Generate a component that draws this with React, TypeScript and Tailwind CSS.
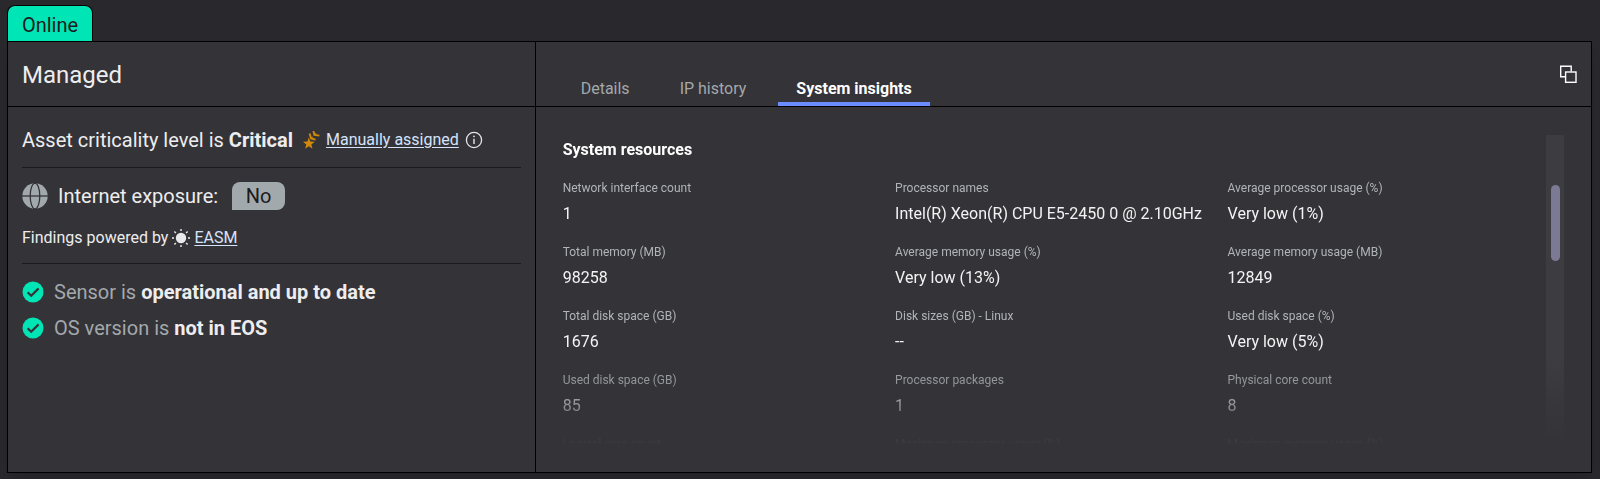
import { useState } from "react";
import type { ReactNode } from "react";

const TABS = ["Details", "IP history", "System insights"];

const RESOURCES = [
  { label: "Network interface count", value: "1" },
  { label: "Processor names", value: "Intel(R) Xeon(R) CPU E5-2450 0 @ 2.10GHz" },
  { label: "Average processor usage (%)", value: "Very low (1%)" },
  { label: "Total memory (MB)", value: "98258" },
  { label: "Average memory usage (%)", value: "Very low (13%)" },
  { label: "Average memory usage (MB)", value: "12849" },
  { label: "Total disk space (GB)", value: "1676" },
  { label: "Disk sizes (GB) - Linux", value: "--" },
  { label: "Used disk space (%)", value: "Very low (5%)" },
  { label: "Used disk space (GB)", value: "85" },
  { label: "Processor packages", value: "1" },
  { label: "Physical core count", value: "8" },
  { label: "Logical core count", value: "" },
  { label: "Maximum processor usage (%)", value: "" },
  { label: "Maximum memory usage (%)", value: "" },
];

function StarIcon() {
  return (
    <svg width="17" height="19" viewBox="0 0 17 19" fill="none" className="shrink-0">
      <path
        d="M5.8 6.4 L7.3 10.6 L11.8 10.8 L8.3 13.5 L9.5 17.8 L5.8 15.3 L2.1 17.8 L3.3 13.5 L0 10.8 L4.4 10.6 Z"
        fill="#cf8a09"
      />
      <path d="M6.6 2.6 L8 7.4 L12.6 8.6" stroke="#cf8a09" strokeWidth="1.9" />
      <path d="M10.4 0 L11.4 4 L16.4 4.6" stroke="#cf8a09" strokeWidth="1.9" />
      <path d="M8 7.4 L9.6 5.8 M11.4 4 L13 2.4" stroke="#cf8a09" strokeWidth="1.2" />
    </svg>
  );
}

function InfoIcon() {
  return (
    <svg width="18" height="18" viewBox="0 0 18 18" fill="none" stroke="#e6e6e8">
      <circle cx="9" cy="9" r="7.6" strokeWidth="1.3" />
      <line x1="9" y1="7.8" x2="9" y2="13" strokeWidth="1.4" />
      <circle cx="9" cy="5.3" r="0.9" fill="#e6e6e8" stroke="none" />
    </svg>
  );
}

function GlobeIcon() {
  return (
    <svg width="26" height="26" viewBox="0 0 26 26" fill="none" className="shrink-0">
      <circle cx="13" cy="13" r="12.7" fill="#a2a9ac" />
      <g stroke="#343337" strokeWidth="1.3">
        <ellipse cx="13" cy="13" rx="4.8" ry="12.9" />
        <line x1="0" y1="13" x2="26" y2="13" />
      </g>
    </svg>
  );
}

function SunIcon() {
  return (
    <svg width="18" height="18" viewBox="0 0 18 18" className="shrink-0">
      <circle cx="9" cy="9" r="5.2" fill="#e9e9eb" />
      <g stroke="#e9e9eb" strokeWidth="1.4">
        <path d="M9 0v2M9 16v2M0 9h2M16 9h2M2.4 2.4l1.5 1.5M14.1 14.1l1.5 1.5M2.4 15.6l1.5-1.5M14.1 3.9l1.5-1.5" />
      </g>
    </svg>
  );
}

function CheckIcon() {
  return (
    <svg width="22" height="22" viewBox="0 0 22 22" fill="none" className="shrink-0">
      <circle cx="11" cy="11" r="10.5" fill="#00e5b5" />
      <path d="M5.6 11.2 L9.2 14.8 L16.6 7.4" stroke="#343337" strokeWidth="2.2" />
    </svg>
  );
}

function CopyIcon() {
  return (
    <svg width="18" height="18" viewBox="0 0 18 18" fill="none" stroke="#ffffff" strokeWidth="1.4">
      <path d="M6 11.7H1.7V1.3H12.2V6.5" />
      <rect x="6.6" y="7" width="10.4" height="10.3" />
    </svg>
  );
}

function StatusRow({ children }: { children: ReactNode }) {
  return (
    <li className="flex h-9 items-center gap-2.5 text-xl text-[#a3a8ac]">
      <CheckIcon />
      <span>{children}</span>
    </li>
  );
}

export default function App() {
  const [active, setActive] = useState("System insights");

  return (
    <div className="min-h-screen bg-[#29282d] pt-[5px] pr-2 pl-[7px] font-[Roboto,sans-serif] text-[#ededef]">
      <div className="flex h-9 w-[86px] items-center justify-center rounded-t-lg border border-b-0 border-black bg-[#00e5b5] pt-0.5 text-xl text-[#1c1b20]">
        Online
      </div>

      <div className="flex border border-black bg-[#343337] shadow-lg">
        <section className="w-1/3 border-r border-black">
          <h1 className="flex h-[65px] items-center border-b border-black px-3.5 pt-0.5 text-2xl">
            Managed
          </h1>

          <div className="px-3.5">
            <div className="flex h-[61px] items-center gap-1.5 border-b border-[#1b1b1e] pt-1.5">
              <p className="mr-1 text-xl">
                Asset criticality level is <b className="font-bold">Critical</b>
              </p>
              <StarIcon />
              <a href="#assigned" className="text-base text-[#d5e3fb] underline underline-offset-2">
                Manually assigned
              </a>
              <button type="button" aria-label="Criticality details">
                <InfoIcon />
              </button>
            </div>

            <div className="flex h-24 flex-col gap-4 border-b border-[#1b1b1e] pt-3.5">
              <div className="flex items-center gap-2.5 text-xl">
                <GlobeIcon />
                <span className="mr-1">Internet exposure:</span>
                <span className="flex h-7 w-[53px] items-center justify-center rounded-lg rounded-bl-none bg-[#a2a9ac] text-[#1c1b20]">
                  No
                </span>
              </div>
              <p className="flex items-center gap-1 text-base">
                Findings powered by
                <SunIcon />
                <a href="#easm" className="text-[#d5e3fb] underline underline-offset-2">
                  EASM
                </a>
              </p>
            </div>

            <ul className="pt-2.5">
              <StatusRow>
                Sensor is <b className="font-bold text-[#ededef]">operational and up to date</b>
              </StatusRow>
              <StatusRow>
                OS version is <b className="font-bold text-[#ededef]">not in EOS</b>
              </StatusRow>
            </ul>
          </div>
        </section>

        <section className="min-w-0 flex-1">
          <div className="flex h-[65px] items-end justify-between border-b border-black pr-3.5 pl-[27px]">
            <div role="tablist" className="flex">
              {TABS.map((tab) => (
                <button
                  key={tab}
                  type="button"
                  role="tab"
                  aria-selected={tab === active}
                  onClick={() => setActive(tab)}
                  className={
                    tab === active
                      ? "h-8 rounded-t-xs border-b-4 border-[#6b8cff] px-[18px] pt-0.5 font-bold text-white"
                      : "mr-3.5 h-8 border-b-4 border-transparent px-[18px] pt-0.5 text-[#a3a8ac]"
                  }
                >
                  {tab}
                </button>
              ))}
            </div>
            <button type="button" aria-label="Copy" className="mb-[23px]">
              <CopyIcon />
            </button>
          </div>

          <div className="py-7 pr-[27px] pl-[27px]">
            <div className="flex h-[309px] overflow-hidden [mask-image:linear-gradient(to_bottom,#000_225px,transparent_312px)]">
              <div className="min-w-0 flex-1">
                <h2 className="pt-[3px] leading-6 font-bold text-white">System resources</h2>
                <dl className="mt-3.5 grid grid-cols-3 gap-x-3.5">
                  {RESOURCES.map(({ label, value }) => (
                    <div key={label} className="h-16 whitespace-nowrap">
                      <dt className="text-xs leading-6 text-[#b0b4b8]">{label}</dt>
                      <dd className="text-base leading-7 text-[#f3f3f5]">{value}</dd>
                    </div>
                  ))}
                </dl>
              </div>
              <div className="w-[18px] shrink-0 bg-[#3d3c40] pt-[50px]">
                <div className="mx-auto h-19 w-[9px] rounded-full bg-[#7b7993]" />
              </div>
            </div>
          </div>
        </section>
      </div>
    </div>
  );
}
